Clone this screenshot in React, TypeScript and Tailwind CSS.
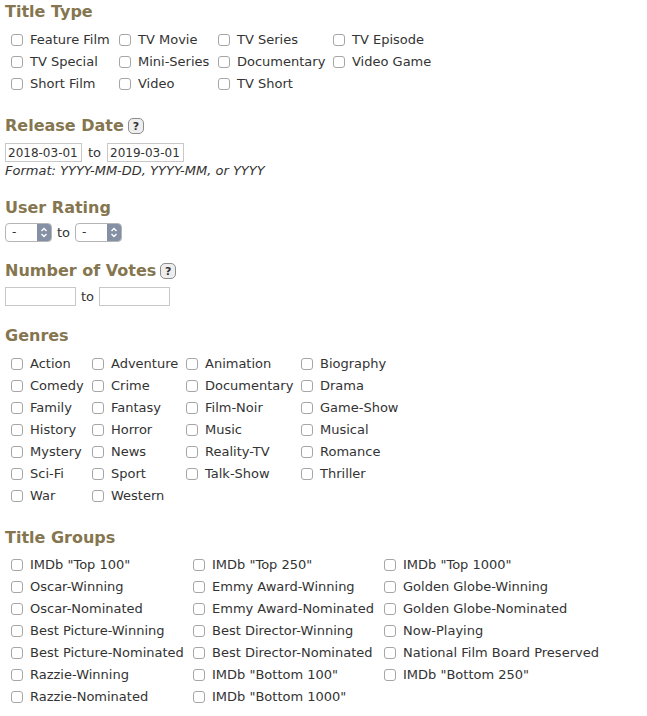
const titleTypes = [
  "Feature Film", "TV Movie", "TV Series", "TV Episode",
  "TV Special", "Mini-Series", "Documentary", "Video Game",
  "Short Film", "Video", "TV Short",
];

const genres = [
  "Action", "Adventure", "Animation", "Biography",
  "Comedy", "Crime", "Documentary", "Drama",
  "Family", "Fantasy", "Film-Noir", "Game-Show",
  "History", "Horror", "Music", "Musical",
  "Mystery", "News", "Reality-TV", "Romance",
  "Sci-Fi", "Sport", "Talk-Show", "Thriller",
  "War", "Western",
];

const titleGroups = [
  'IMDb "Top 100"', 'IMDb "Top 250"', 'IMDb "Top 1000"',
  "Oscar-Winning", "Emmy Award-Winning", "Golden Globe-Winning",
  "Oscar-Nominated", "Emmy Award-Nominated", "Golden Globe-Nominated",
  "Best Picture-Winning", "Best Director-Winning", "Now-Playing",
  "Best Picture-Nominated", "Best Director-Nominated", "National Film Board Preserved",
  "Razzie-Winning", 'IMDb "Bottom 100"', 'IMDb "Bottom 250"',
  "Razzie-Nominated", 'IMDb "Bottom 1000"',
];

function Heading({ children, help }: { children: React.ReactNode; help?: boolean }) {
  return (
    <h3 className="flex items-center gap-[4px] h-[20px] text-[16px] leading-[20px] font-bold text-[#857650]">
      {children}
      {help && (
        <span className="inline-flex items-center justify-center w-[16px] h-[16px] rounded-[5px] border border-[#8c8c8c] bg-[#eeeeee] text-[11px] leading-none font-bold text-[#333]">
          ?
        </span>
      )}
    </h3>
  );
}

function Check({ label }: { label: string }) {
  return (
    <label className="flex items-center h-[22px] whitespace-nowrap">
      <span className="w-[12px] h-[12px] rounded-[3px] border border-[#a6a6a6] bg-white shrink-0" />
      <span className="ml-[7px]">{label}</span>
    </label>
  );
}

function CheckGrid({ items, cols, top }: { items: string[]; cols: string; top: string }) {
  return (
    <div className={`grid ml-[6px] ${top} ${cols}`}>
      {items.map((item) => (
        <Check key={item} label={item} />
      ))}
    </div>
  );
}

function TextBox({ value, width }: { value?: string; width: string }) {
  return (
    <span className={`inline-flex items-center h-[19px] border border-[#c8c8c8] bg-white px-[2px] text-[12px] whitespace-nowrap overflow-hidden ${width}`}>
      {value}
    </span>
  );
}

function SelectBox() {
  return (
    <span className="inline-flex items-stretch w-[47px] h-[19px] rounded-[4px] border border-[#b5b5b5] bg-white overflow-hidden">
      <span className="flex-1 pl-[6px] text-[12px] leading-[17px]">-</span>
      <span className="w-[14px] bg-[#8590a4] flex items-center justify-center">
        <svg width="8" height="11" viewBox="0 0 8 11" fill="none" stroke="white" strokeWidth="1.4">
          <path d="M1.5 4 L4 1.5 L6.5 4" />
          <path d="M1.5 7 L4 9.5 L6.5 7" />
        </svg>
      </span>
    </span>
  );
}

export default function App() {
  return (
    <div
      className="w-[647px] h-[716px] bg-white pl-[5px] pt-[2px] text-[13px] text-[#333] overflow-hidden"
      style={{ fontFamily: '"DejaVu Sans", Verdana, sans-serif' }}
    >
      <Heading>Title Type</Heading>
      <CheckGrid items={titleTypes} cols="grid-cols-[108px_99px_115px_1fr]" top="mt-[7px]" />

      <div className="mt-[21px]">
        <Heading help>Release Date</Heading>
        <div className="flex items-center mt-[7px]">
          <TextBox value="2018-03-01" width="w-[77px]" />
          <span className="mx-[6px]">to</span>
          <TextBox value="2019-03-01" width="w-[77px]" />
        </div>
        <p className="italic leading-[16px]">Format: YYYY-MM-DD, YYYY-MM, or YYYY</p>
      </div>

      <div className="mt-[19px]">
        <Heading>User Rating</Heading>
        <div className="flex items-center mt-[5px]">
          <SelectBox />
          <span className="mx-[5px]">to</span>
          <SelectBox />
        </div>
      </div>

      <div className="mt-[19px]">
        <Heading help>Number of Votes</Heading>
        <div className="flex items-center mt-[6px]">
          <TextBox width="w-[71px]" />
          <span className="mx-[5px]">to</span>
          <TextBox width="w-[71px]" />
        </div>
      </div>

      <div className="mt-[19px]">
        <Heading>Genres</Heading>
        <CheckGrid items={genres} cols="grid-cols-[81px_94px_115px_1fr]" top="mt-[7px]" />
      </div>

      <div className="mt-[21px]">
        <Heading>Title Groups</Heading>
        <CheckGrid items={titleGroups} cols="grid-cols-[182px_191px_1fr]" top="mt-[6px]" />
      </div>
    </div>
  );
}
